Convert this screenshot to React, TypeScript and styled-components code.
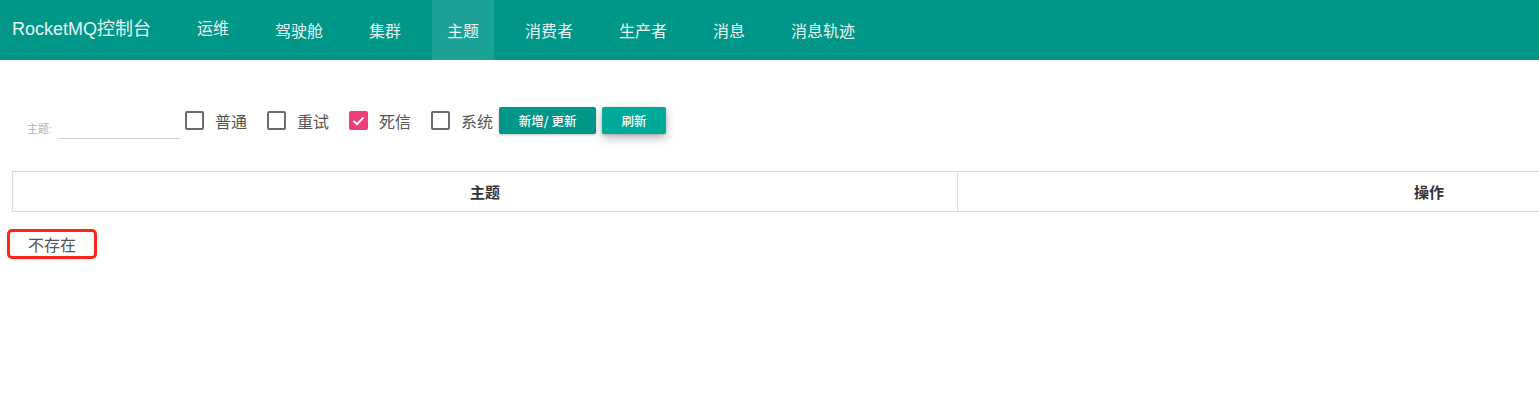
import React from "react";
import styled, { createGlobalStyle } from "styled-components";

const Global = createGlobalStyle`
  html, body { margin: 0; padding: 0; background: #fff; overflow: hidden; }
  body { font-family: "Liberation Sans", "Noto Sans CJK SC", sans-serif; }
  * { box-sizing: border-box; }
`;

const Page = styled.div`
  width: 1539px;
  height: 417px;
  overflow: hidden;
`;

const NavBar = styled.header`
  height: 60px;
  background: #009688;
  display: flex;
  align-items: stretch;
  padding-left: 12px;
`;

const Brand = styled.div`
  font-size: 18px;
  color: #e6f4f2;
  display: flex;
  align-items: center;
  margin-right: 30px;
  padding-bottom: 6px;
  width: 140px;
`;

const NavList = styled.nav`
  display: flex;
  gap: 16px;
`;

const NavItem = styled.div<{ $active?: boolean; $lift?: number }>`
  padding: 0 15px;
  display: flex;
  align-items: center;
  font-size: 16px;
  color: #e8f5f3;
  background: ${(p) => (p.$active ? "rgba(255,255,255,0.1)" : "transparent")};
  padding-bottom: ${(p) => 1 + (p.$lift ?? 0) * 2}px;
`;

const Content = styled.main`
  padding: 0 12px;
`;

const FilterRow = styled.div`
  display: flex;
  align-items: center;
  height: 31px;
  margin-top: 45px;
`;

const Field = styled.label`
  display: flex;
  align-items: flex-end;
  align-self: flex-end;
  margin-bottom: -3px;
  padding-left: 15px;
`;

const FieldLabel = styled.span`
  font-size: 11px;
  color: #b0b0b0;
  margin-right: 7px;
  padding-bottom: 3px;
`;

const TextInput = styled.input`
  width: 121px;
  height: 22px;
  border: none;
  border-bottom: 1px solid #cfcfcf;
  outline: none;
  padding: 0;
  font-size: 13px;
`;

const CheckGroup = styled.div`
  display: flex;
  align-items: center;
  margin-left: 5px;
`;

const CheckItem = styled.label`
  display: flex;
  align-items: center;
  margin-right: 20px;
  &:last-child { margin-right: 6px; }
`;

const Box = styled.span<{ $checked?: boolean }>`
  width: 19px;
  height: 19px;
  border-radius: 2px;
  border: ${(p) => (p.$checked ? "none" : "2px solid #6b6b6b")};
  background: ${(p) => (p.$checked ? "#ec3f78" : "transparent")};
  display: flex;
  align-items: center;
  justify-content: center;
  margin-right: 11px;
`;

const CheckLabel = styled.span`
  font-size: 16px;
  color: #555;
  font-family: "Noto Sans CJK SC", sans-serif;
`;

const Button = styled.button<{ $raised?: boolean }>`
  height: 27px;
  border: none;
  border-radius: 2px;
  color: #fff;
  font-size: 12.5px;
  font-weight: 500;
  font-family: "Noto Sans CJK SC", sans-serif;
  background: ${(p) => (p.$raised ? "#00aa9b" : "#009688")};
  box-shadow: ${(p) =>
    p.$raised
      ? "0 4px 10px rgba(0,0,0,0.28), 0 1px 3px rgba(0,0,0,0.15)"
      : "0 1px 3px rgba(0,0,0,0.25)"};
  margin-right: 6px;
  padding: 0;
  width: ${(p) => (p.$raised ? "64px" : "97px")};
  margin-top: -1px;
`;

const Table = styled.table`
  width: 1889px;
  margin-top: 35px;
  border-collapse: collapse;
`;

const Th = styled.th`
  height: 40px;
  border: 1px solid #dcdcdc;
  font-size: 15px;
  font-weight: bold;
  color: #333;
  text-align: center;
  font-family: "Noto Sans CJK SC", sans-serif;
  padding: 0;
`;

const Notice = styled.div`
  display: inline-block;
  margin-top: 17px;
  margin-left: -5px;
  height: 30px;
  border: 3px solid #ff2418;
  border-radius: 5px;
  padding: 0 18px;
  font-size: 16px;
  line-height: 24px;
  color: #555;
  font-family: "Noto Sans CJK SC", sans-serif;
`;

const Check = () => (
  <svg width="13" height="10" viewBox="0 0 13 10">
    <path d="M1.5 5 L5 8.2 L11.5 1.5" fill="none" stroke="#fff" strokeWidth="2" />
  </svg>
);

const navItems = ["运维", "驾驶舱", "集群", "主题", "消费者", "生产者", "消息", "消息轨迹"];
const checks = [
  { label: "普通", checked: false },
  { label: "重试", checked: false },
  { label: "死信", checked: true },
  { label: "系统", checked: false },
];

export default function App() {
  return (
    <Page>
      <Global />
      <NavBar>
        <Brand>RocketMQ控制台</Brand>
        <NavList>
          {navItems.map((n, i) => (
            <NavItem key={n} $active={n === "主题"} $lift={i === 0 ? 3 : 0}>
              {n}
            </NavItem>
          ))}
        </NavList>
      </NavBar>
      <Content>
        <FilterRow>
          <Field>
            <FieldLabel>主题:</FieldLabel>
            <TextInput />
          </Field>
          <CheckGroup>
            {checks.map((c) => (
              <CheckItem key={c.label}>
                <Box $checked={c.checked}>{c.checked && <Check />}</Box>
                <CheckLabel>{c.label}</CheckLabel>
              </CheckItem>
            ))}
          </CheckGroup>
          <Button>新增/ 更新</Button>
          <Button $raised>刷新</Button>
        </FilterRow>
        <Table>
          <thead>
            <tr>
              <Th style={{ width: "945px" }}>主题</Th>
              <Th>操作</Th>
            </tr>
          </thead>
        </Table>
        <Notice>不存在</Notice>
      </Content>
    </Page>
  );
}
